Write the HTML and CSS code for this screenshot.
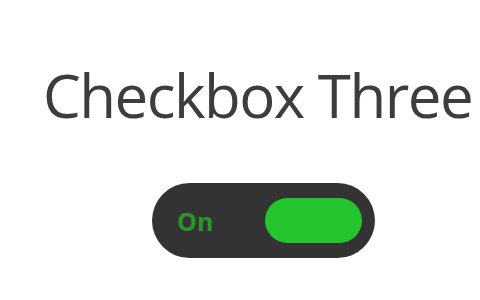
FILE: index.html
```html
<!DOCTYPE html>
<html>
<head>
<meta charset="utf-8">
<link rel="stylesheet" href="styles.css">
</head>
<body>
<div class="page">
  <h1 class="title">Checkbox Three</h1>
  <div class="toggle">
    <span class="label">On</span>
    <span class="knob"></span>
  </div>
</div>
</body>
</html>
```
FILE: styles.css
```css
html, body {
  margin: 0;
  padding: 0;
  background: #ffffff;
}
.page {
  width: 480px;
  height: 300px;
  display: flex;
  flex-direction: column;
  align-items: flex-start;
  padding-left: 43px;
  box-sizing: border-box;
}
.title {
  margin: 55px 0 0 0;
  font-family: "Open Sans", sans-serif;
  font-weight: 500;
  font-size: 60px;
  letter-spacing: -1.5px;
  line-height: 80px;
  color: #3d3d3d;
  white-space: nowrap;
}
.toggle {
  margin: 48px 0 0 109px;
  width: 223px;
  height: 75px;
  border-radius: 38px;
  background: #333333;
  display: flex;
  align-items: center;
  box-sizing: border-box;
  padding: 0 13px 0 25px;
}
.label {
  font-family: "Open Sans", sans-serif;
  font-weight: 700;
  font-size: 25px;
  color: #2b952b;
  flex: 1;
}
.knob {
  width: 97px;
  height: 45px;
  border-radius: 23px;
  background: #23c52e;
}
```
